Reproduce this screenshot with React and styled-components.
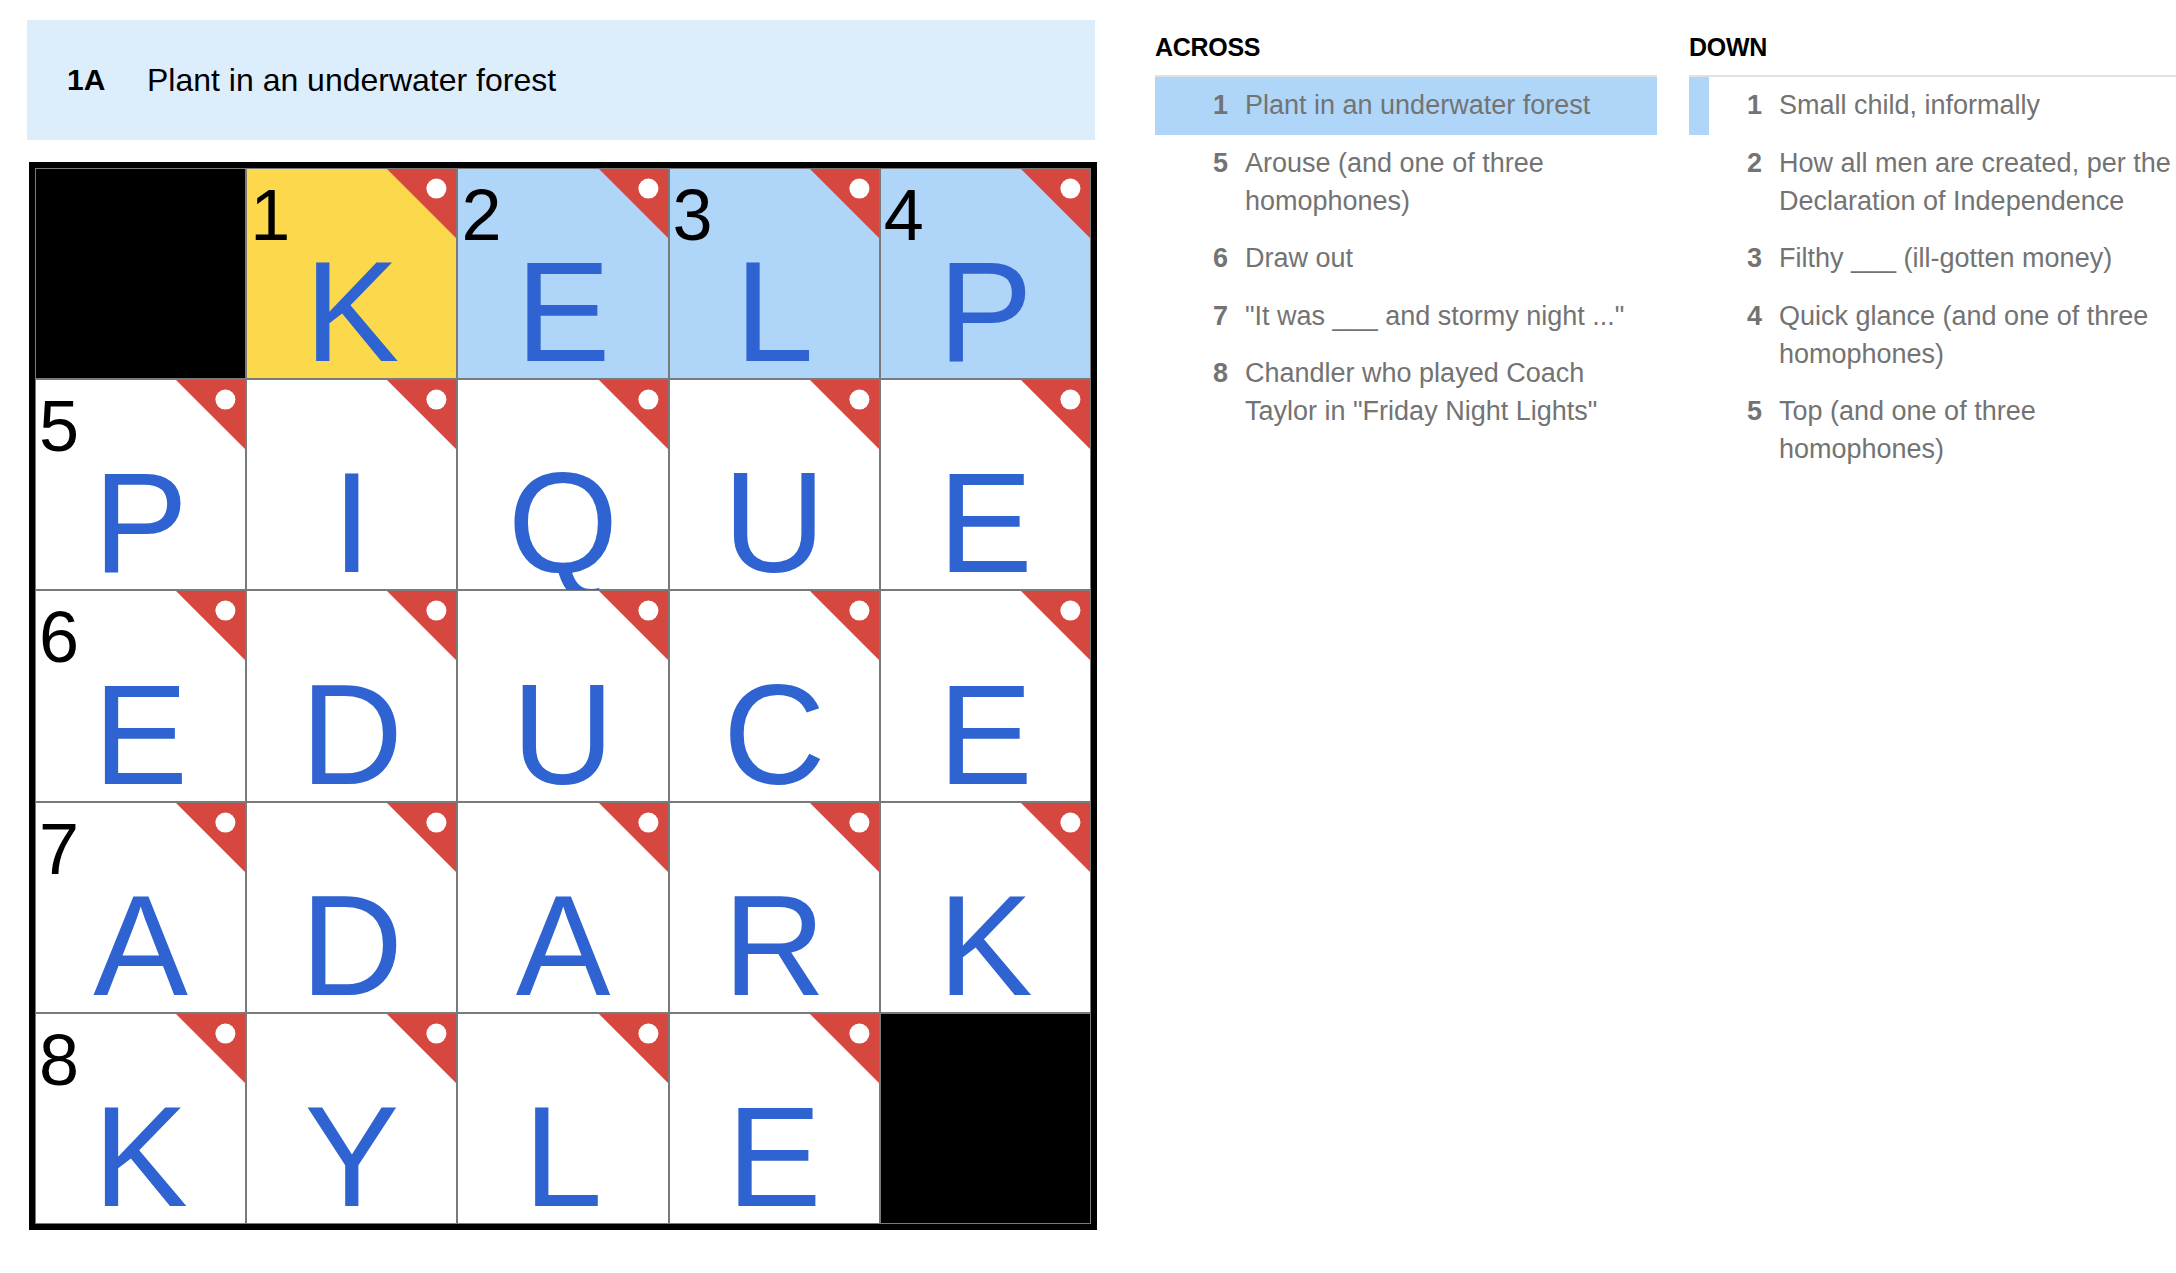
import React from 'react';
import styled, { createGlobalStyle } from 'styled-components';

const GlobalStyle = createGlobalStyle`
  html, body {
    margin: 0;
    padding: 0;
    background: #ffffff;
    overflow: hidden;
  }
  body {
    font-family: "Liberation Sans", Arial, Helvetica, sans-serif;
  }
`;

const Page = styled.div`
  display: flex;
  align-items: flex-start;
  gap: 58px;
  padding: 20px 0 0 27px;
  width: max-content;
`;

const Board = styled.section`
  display: flex;
  flex-direction: column;
  width: 1070px;
`;

const ClueBar = styled.div`
  display: flex;
  align-items: center;
  width: 1068px;
  height: 120px;
  box-sizing: border-box;
  padding-left: 40px;
  background: #dcedfc;
  color: #000;
`;

const ClueBarLabel = styled.span`
  width: 80px;
  font-size: 30px;
  font-weight: 700;
`;

const ClueBarText = styled.span`
  font-size: 32px;
`;

const GridFrame = styled.div`
  margin: 22px 0 0 2px;
  width: 1056px;
  height: 1056px;
  border: 6px solid #000;
  display: grid;
  grid-template-columns: repeat(5, 1fr);
  grid-template-rows: repeat(5, 1fr);
`;

const cellBg = {
  black: '#000000',
  selected: '#fcd84c',
  word: '#afd6f9',
  plain: '#ffffff',
};

const Cell = styled.div`
  position: relative;
  box-sizing: border-box;
  border: 1px solid #7a7a7a;
  background: ${(p) => cellBg[p.$state]};
  display: flex;
  justify-content: center;
  align-items: flex-end;
`;

const Letter = styled.span`
  font-size: 142px;
  line-height: 132px;
  color: #2f63d1;
`;

const CellNumber = styled.span`
  position: absolute;
  top: 10px;
  left: 3px;
  font-size: 72px;
  line-height: 1;
  color: #000;
`;

const Corner = styled.svg`
  position: absolute;
  top: 0;
  right: 0;
  width: 69px;
  height: 69px;
`;

const Lists = styled.div`
  display: flex;
  gap: 32px;
  margin-top: 12px;
`;

const ListColumn = styled.section`
  width: 502px;
  flex: none;
`;

const ListHeader = styled.h3`
  margin: 0;
  font-size: 25px;
  line-height: 30px;
  font-weight: 700;
  letter-spacing: -0.3px;
  color: #000;
  padding-bottom: 13px;
  border-bottom: 2px solid #e1e1e1;
`;

const ClueList = styled.ol`
  list-style: none;
  margin: 0;
  padding: 0;
`;

const ClueItem = styled.li`
  display: grid;
  grid-template-columns: 73px 1fr;
  column-gap: 17px;
  padding: 9px 10px 10.5px 0;
  font-size: 27px;
  line-height: 38px;
  color: #737373;
  background: ${(p) => (p.$active ? '#afd6f9' : 'transparent')};
  box-shadow: ${(p) => (p.$cross ? 'inset 20px 0 0 #afd6f9' : 'none')};
`;

const ClueNum = styled.span`
  font-weight: 700;
  text-align: right;
`;

const ClueText = styled.span``;

const CornerFlag = () => (
  <Corner viewBox="0 0 69 69">
    <polygon points="0,0 69,0 69,69" fill="#d5473f" />
    <circle cx="49.4" cy="19.6" r="10" fill="#ffffff" />
  </Corner>
);

const grid = [
  [null, { l: 'K', n: 1, s: 'selected' }, { l: 'E', n: 2, s: 'word' }, { l: 'L', n: 3, s: 'word' }, { l: 'P', n: 4, s: 'word' }],
  [{ l: 'P', n: 5 }, { l: 'I' }, { l: 'Q' }, { l: 'U' }, { l: 'E' }],
  [{ l: 'E', n: 6 }, { l: 'D' }, { l: 'U' }, { l: 'C' }, { l: 'E' }],
  [{ l: 'A', n: 7 }, { l: 'D' }, { l: 'A' }, { l: 'R' }, { l: 'K' }],
  [{ l: 'K', n: 8 }, { l: 'Y' }, { l: 'L' }, { l: 'E' }, null],
];

const across = [
  { n: 1, t: 'Plant in an underwater forest', active: true },
  { n: 5, t: 'Arouse (and one of three homophones)' },
  { n: 6, t: 'Draw out' },
  { n: 7, t: '"It was ___ and stormy night ..."' },
  { n: 8, t: 'Chandler who played Coach Taylor in "Friday Night Lights"' },
];

const down = [
  { n: 1, t: 'Small child, informally', cross: true },
  { n: 2, t: 'How all men are created, per the Declaration of Independence' },
  { n: 3, t: 'Filthy ___ (ill-gotten money)' },
  { n: 4, t: 'Quick glance (and one of three homophones)' },
  { n: 5, t: 'Top (and one of three homophones)' },
];

export default function App() {
  return (
    <>
      <GlobalStyle />
      <Page>
        <Board>
          <ClueBar>
            <ClueBarLabel>1A</ClueBarLabel>
            <ClueBarText>Plant in an underwater forest</ClueBarText>
          </ClueBar>
          <GridFrame>
            {grid.flat().map((c, i) =>
              c ? (
                <Cell key={i} $state={c.s || 'plain'}>
                  {c.n && <CellNumber>{c.n}</CellNumber>}
                  <CornerFlag />
                  <Letter>{c.l}</Letter>
                </Cell>
              ) : (
                <Cell key={i} $state="black" />
              )
            )}
          </GridFrame>
        </Board>
        <Lists>
          <ListColumn>
            <ListHeader>ACROSS</ListHeader>
            <ClueList>
              {across.map((c) => (
                <ClueItem key={c.n} $active={c.active}>
                  <ClueNum>{c.n}</ClueNum>
                  <ClueText>{c.t}</ClueText>
                </ClueItem>
              ))}
            </ClueList>
          </ListColumn>
          <ListColumn>
            <ListHeader>DOWN</ListHeader>
            <ClueList>
              {down.map((c) => (
                <ClueItem key={c.n} $cross={c.cross}>
                  <ClueNum>{c.n}</ClueNum>
                  <ClueText>{c.t}</ClueText>
                </ClueItem>
              ))}
            </ClueList>
          </ListColumn>
        </Lists>
      </Page>
    </>
  );
}
